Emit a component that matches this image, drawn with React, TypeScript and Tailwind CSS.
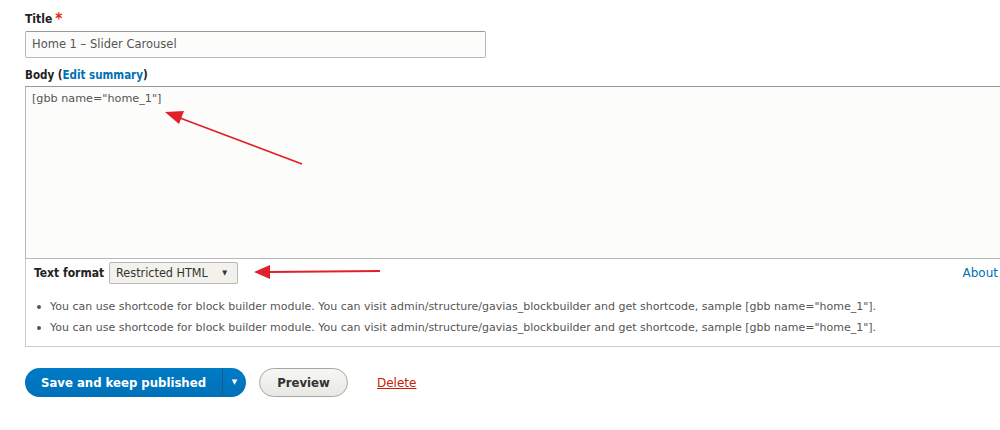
import React from "react";

const font = { fontFamily: '"DejaVu Sans", "Open Sans", sans-serif' };
const cond = { fontFamily: '"DejaVu Sans Condensed", "DejaVu Sans", sans-serif' };

function Arrows() {
  return (
    <svg
      className="pointer-events-none absolute left-0 top-0"
      width="1000"
      height="430"
      viewBox="0 0 1000 430"
    >
      <line x1="302" y1="164" x2="180" y2="118" stroke="#e0202a" strokeWidth="1.8" />
      <polygon points="165,112 184,111 179,124" fill="#e0202a" />
      <line x1="380" y1="271" x2="268" y2="272" stroke="#e0202a" strokeWidth="1.8" />
      <polygon points="254,272 270,265 270,279" fill="#e0202a" />
    </svg>
  );
}

export default function App() {
  const hint =
    'You can use shortcode for block builder module. You can visit admin/structure/gavias_blockbuilder and get shortcode, sample [gbb name="home_1"].';

  return (
    <div className="relative h-[430px] w-[1000px] overflow-hidden bg-white text-[#333]" style={font}>
      <div className="pl-[25px] pt-[12px]">
        <div className="flex items-start gap-[3px] text-[12px] font-bold leading-[15px] text-[#222]" style={cond}>
          Title <span className="text-[15px] leading-[15px] text-[#e32700]">*</span>
        </div>
        <div className="mt-[4px] h-[27px] w-[461px] rounded-[2px] border border-[#b8b8b8] border-t-[#999] bg-[#fcfcfa] px-[6px] text-[11.5px] leading-[25px] text-[#555]">
          Home 1 – Slider Carousel
        </div>

        <div className="mt-[10px] text-[11.5px] font-bold leading-[15px] text-[#222]" style={cond}>
          Body (<span className="text-[#0071b3]">Edit summary</span>)
        </div>
        <div className="mt-[3px] h-[173px] w-[1000px] border border-[#b8b8b8] border-t-[#999] bg-[#fcfcfa] px-[6px] pt-[4px] text-[11.2px] leading-[16px] text-[#555]">
          [gbb name="home_1"]
        </div>

        <div className="h-[88px] w-[1000px] border-b border-l border-[#ccc] pl-[8px] pr-[27px]">
          <div className="flex h-[27px] items-center pt-[1px]">
            <span className="text-[12px] font-bold text-[#222]" style={cond}>Text format</span>
            <div className="ml-[5px] flex h-[22px] w-[129px] items-center rounded-[2px] border border-[#b8b8b8] bg-[#f2f1eb] pl-[6px] pr-[10px] text-[12.5px] text-[#333]" style={cond}>
              <span className="flex-1">Restricted HTML</span>
              <span className="text-[7px]">▼</span>
            </div>
            <span className="ml-auto text-[12px] text-[#0071b3]">About</span>
          </div>
          <ul className="mt-[15px] space-y-[9px] text-[11px] leading-[12px] text-[#555]">
            <li className="flex items-center gap-[9px] pl-[3px]">
              <span className="h-[4px] w-[4px] rounded-full bg-[#555]" />
              {hint}
            </li>
            <li className="flex items-center gap-[9px] pl-[3px]">
              <span className="h-[4px] w-[4px] rounded-full bg-[#555]" />
              {hint}
            </li>
          </ul>
        </div>

        <div className="mt-[21px] flex items-center">
          <div className="flex h-[29px] items-center overflow-hidden rounded-full bg-gradient-to-b from-[#007bc6] to-[#0071b8] text-white">
            <span className="w-[197px] text-center text-[13px] font-bold" style={cond}>Save and keep published</span>
            <span className="flex h-full w-[24px] items-center justify-center border-l border-[#1a5c8c]">
              <span className="text-[7px]">▼</span>
            </span>
          </div>
          <div className="ml-[13px] flex h-[29px] w-[89px] items-center justify-center rounded-full border border-[#a6a6a6] bg-gradient-to-b from-[#f6f6f3] to-[#e8e8e4] text-[13px] font-bold text-[#333]" style={cond}>
            Preview
          </div>
          <span className="ml-[29px] text-[12px] text-[#c72100] underline">Delete</span>
        </div>
      </div>
      <Arrows />
    </div>
  );
}
